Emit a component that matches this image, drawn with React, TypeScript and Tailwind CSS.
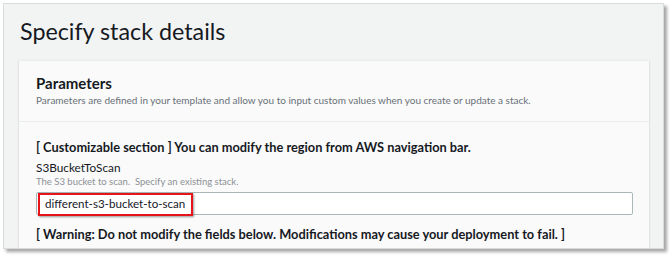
export default function App() {
  return (
    <div className="w-[671px] h-[257px] bg-white pl-[3px] pt-[3px] font-['Lato',sans-serif] text-[#16191f]">
      {/* Screenshot frame */}
      <div className="w-[661px] h-[246px] bg-[#f2f3f3] border border-[#d9dcdc] shadow-[3px_3px_3px_rgba(0,0,0,0.35)] overflow-hidden">
        <h1 className="pl-[16px] pt-[11px] text-[23.3px] leading-[32px] font-normal">
          Specify stack details
        </h1>

        <div className="ml-[15px] mt-[13px] w-[630px] h-[200px] bg-[#fafafa] shadow-[0_1px_2px_rgba(0,0,0,0.2)] border-t border-[#eaeded]">
          {/* Header */}
          <div className="px-[17px] pt-[12px] pb-[14px] border-b border-[#eaeded]">
            <h2 className="text-[15px] leading-[20px] font-bold">Parameters</h2>
            <p className="text-[10px] leading-[14px] text-[#687078]">
              Parameters are defined in your template and allow you to input custom values when you create or update a stack.
            </p>
          </div>

          {/* Body */}
          <div className="px-[17px] pt-[17px]">
            <div className="text-[12.8px] leading-[16px] font-bold">
              [ Customizable section ] You can modify the region from AWS navigation bar.
            </div>
            <div className="mt-[5px] text-[11.8px] leading-[15px]">S3BucketToScan</div>
            <div className="text-[9.5px] leading-[13px] text-[#8d9196]">
              The S3 bucket to scan.&nbsp; Specify an existing stack.
            </div>
            <div className="relative mt-[4px] w-[597px] h-[23px] bg-white border border-[#aab7b8] rounded-[2px] flex items-center pl-[8px] text-[11.6px]">
              different-s3-bucket-to-scan
              <div className="absolute left-[1px] top-[0px] w-[155px] h-[23px] border-[2px] border-[#e8141b] shadow-[1px_1px_2px_rgba(0,0,0,0.4)]" />
            </div>
            <div className="mt-[11px] text-[12.8px] leading-[16px] font-bold">
              [ Warning: Do not modify the fields below. Modifications may cause your deployment to fail. ]
            </div>
          </div>
        </div>
      </div>
    </div>
  );
}
